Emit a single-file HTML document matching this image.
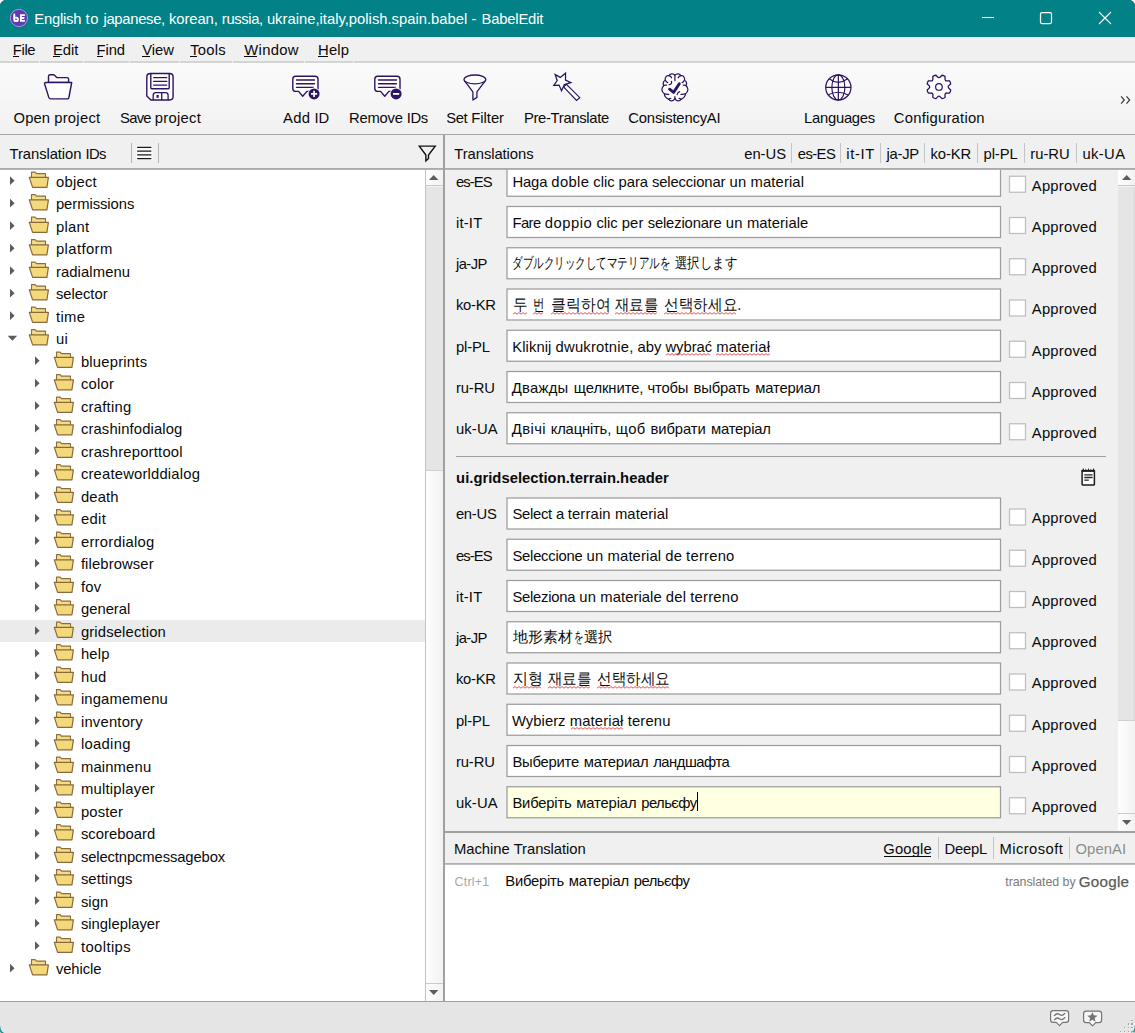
<!DOCTYPE html>
<html><head><meta charset="utf-8"><title>BabelEdit</title>
<style>
html,body{margin:0;padding:0}
body{width:1135px;height:1033px;overflow:hidden;background:#fff;font-family:"Liberation Sans",sans-serif;color:#0a0a0a;position:relative}
#win{position:absolute;left:0;top:0;width:1135px;height:1033px;background:#f0f0f0;overflow:hidden}
.t{position:absolute;white-space:pre;font-size:14.8px;line-height:20px}
.r{position:absolute}
svg{position:absolute;overflow:visible}
u{text-decoration:underline;text-underline-offset:2px;text-decoration-thickness:1px}
</style></head><body><div id="win">

<div class="r" style="left:0px;top:0px;width:1135px;height:37px;background:#028286;"></div>
<svg style="left:0;top:0" width="40" height="37" viewBox="0 0 40 37" fill="none"><circle cx="18.95" cy="17.95" r="8.6" fill="#5f3bb6" stroke="#b28fdd" stroke-width="1"/>
<path d="M14.3 14.4V19.4Q14.3 21.1 16.1 21.1Q17.9 21.1 17.9 19.4Q17.9 17.7 16.3 17.8" stroke="#fff" stroke-width="2" stroke-linecap="round"/>
<path d="M24.9 15.1H20.9V20.9H24.9M20.9 18H24.4" stroke="#fff" stroke-width="1.8" stroke-linejoin="miter"/></svg>
<span class="t" style="left:34.30px;top:8.87px;letter-spacing:-0.219px;color:#fff;">English</span>
<span class="t" style="left:85.42px;top:8.87px;letter-spacing:0.766px;color:#fff;">to</span>
<span class="t" style="left:103.41px;top:8.87px;letter-spacing:-0.297px;color:#fff;">japanese,</span>
<span class="t" style="left:169.03px;top:8.87px;letter-spacing:-0.096px;color:#fff;">korean,</span>
<span class="t" style="left:221.83px;top:8.87px;letter-spacing:-0.377px;color:#fff;">russia,</span>
<span class="t" style="left:266.89px;top:8.87px;color:#fff;">ukraine,italy,polish.spain.babel</span>
<span class="t" style="left:471.42px;top:8.87px;letter-spacing:1.071px;color:#fff;">-</span>
<span class="t" style="left:481.53px;top:8.87px;letter-spacing:-0.190px;color:#fff;">BabelEdit</span>
<svg style="left:0;top:0" width="1135" height="37" viewBox="0 0 1135 37" fill="none" stroke="#fff" stroke-width="1.1">
<path d="M982 17.5H994"/>
<rect x="1040.5" y="12.5" width="11" height="11" rx="1.5" stroke-width="1.25"/>
<path d="M1099 12L1111 24M1111 12L1099 24"/>
</svg>
<span class="t" style="left:12.80px;top:39.87px;letter-spacing:-0.356px;">File</span>
<div class="r" style="left:13px;top:56px;width:6px;height:1px;background:#0a0a0a;"></div>
<span class="t" style="left:53.10px;top:39.87px;letter-spacing:-0.094px;">Edit</span>
<div class="r" style="left:53px;top:56px;width:7px;height:1px;background:#0a0a0a;"></div>
<span class="t" style="left:96.60px;top:39.87px;letter-spacing:-0.133px;">Find</span>
<div class="r" style="left:97px;top:56px;width:6px;height:1px;background:#0a0a0a;"></div>
<span class="t" style="left:142.30px;top:39.87px;letter-spacing:-0.044px;">View</span>
<div class="r" style="left:142px;top:56px;width:8px;height:1px;background:#0a0a0a;"></div>
<span class="t" style="left:190.30px;top:39.87px;letter-spacing:0.176px;">Tools</span>
<div class="r" style="left:190px;top:56px;width:7px;height:1px;background:#0a0a0a;"></div>
<span class="t" style="left:244.30px;top:39.87px;letter-spacing:0.324px;">Window</span>
<div class="r" style="left:244px;top:56px;width:13px;height:1px;background:#0a0a0a;"></div>
<span class="t" style="left:318.10px;top:39.87px;letter-spacing:0.127px;">Help</span>
<div class="r" style="left:318px;top:56px;width:10px;height:1px;background:#0a0a0a;"></div>
<div class="r" style="left:0px;top:61px;width:1135px;height:2px;background:#d4d4d4;"></div>
<div class="r" style="left:39px;top:61px;width:1px;height:2px;background:#f0f0f0;"></div>
<div class="r" style="left:83px;top:61px;width:1px;height:2px;background:#f0f0f0;"></div>
<div class="r" style="left:129px;top:61px;width:1px;height:2px;background:#f0f0f0;"></div>
<div class="r" style="left:179px;top:61px;width:1px;height:2px;background:#f0f0f0;"></div>
<div class="r" style="left:232px;top:61px;width:1px;height:2px;background:#f0f0f0;"></div>
<div class="r" style="left:304px;top:61px;width:1px;height:2px;background:#f0f0f0;"></div>
<div class="r" style="left:353px;top:61px;width:1px;height:2px;background:#f0f0f0;"></div>
<div class="r" style="left:0px;top:63px;width:1135px;height:71px;background:linear-gradient(#fbfbfb,#f1f1f1);"></div>
<div class="r" style="left:0px;top:134px;width:1135px;height:1px;background:#a6a6a6;"></div>
<span class="t" style="left:13.60px;top:107.87px;letter-spacing:0.065px;">Open</span>
<span class="t" style="left:54.18px;top:107.87px;letter-spacing:0.271px;">project</span>
<span class="t" style="left:120.10px;top:107.87px;letter-spacing:-0.776px;">Save</span>
<span class="t" style="left:154.84px;top:107.87px;letter-spacing:0.271px;">project</span>
<span class="t" style="left:283.10px;top:107.87px;letter-spacing:0.327px;">Add</span>
<span class="t" style="left:314.53px;top:107.87px;letter-spacing:-0.148px;">ID</span>
<span class="t" style="left:349.10px;top:107.87px;letter-spacing:-0.260px;">Remove</span>
<span class="t" style="left:406.76px;top:107.87px;letter-spacing:-0.445px;">IDs</span>
<span class="t" style="left:446.30px;top:107.87px;letter-spacing:-0.440px;">Set</span>
<span class="t" style="left:471.31px;top:107.87px;letter-spacing:-0.026px;">Filter</span>
<span class="t" style="left:523.90px;top:107.87px;letter-spacing:-0.312px;">Pre-Translate</span>
<span class="t" style="left:628.30px;top:107.87px;letter-spacing:-0.186px;">ConsistencyAI</span>
<span class="t" style="left:803.90px;top:107.87px;letter-spacing:-0.232px;">Languages</span>
<span class="t" style="left:893.80px;top:107.87px;letter-spacing:0.232px;">Configuration</span>
<svg style="left:0;top:0" width="1135" height="135" viewBox="0 0 1135 135" fill="none" stroke="#2d1364" stroke-width="1.4" stroke-linejoin="round"><path d="M48.5 82.5V76.4Q48.5 74.8 50.1 74.8H53.3Q54 74.8 54.5 75.3L56.7 77.6H66.9Q68.6 77.6 68.6 79.3V82.5Z" fill="#fff"/><path d="M45.9 82.5H71.7L68.9 97.5Q68.6 98.9 67.2 98.9H50.7Q49.3 98.9 48.9 97.6L44.7 84.2Q44.2 82.5 45.9 82.5Z" fill="#fff"/><path d="M150.3 73.5H169.7Q173.1 73.5 173.1 76.9V96.6Q173.1 100 169.7 100H150.9L146.8 96V76.9Q146.8 73.5 150.3 73.5Z" fill="#fff"/><path d="M150.8 73.5V87.8Q150.8 88.8 151.8 88.8H168.2Q169.2 88.8 169.2 87.8V73.5"/><path d="M153.6 77.6H166.8M153.6 81.4H166.8M153.6 85.1H166.8" stroke-linecap="round" stroke-width="1.2"/><path d="M153.2 100V95.2Q153.2 92.6 155.8 92.6H165.5Q168.1 92.6 168.1 95.2V100M161.7 92.6V100" stroke-width="1.3"/><rect x="156.5" y="95" width="2.2" height="2.8" fill="#2d1364" stroke="none"/><path d="M295.8 76.3H315Q318 76.3 318 79.3V88.4Q318 91.4 315 91.4H306.9L302.7 96.3L298.6 91.4H295.8Q292.8 91.4 292.8 88.4V79.3Q292.8 76.3 295.8 76.3Z" fill="#fff"/><path d="M296.5 80H314.5M296.5 83.8H314.5M296.5 87.4H313.5" stroke-linecap="round"/><circle cx="314.1" cy="93.9" r="6.3" fill="#fbfbfb" stroke="none"/><circle cx="314.1" cy="93.9" r="5.5" fill="#2d1364" stroke="none"/><path d="M311 93.9H317.2M314.1 90.8V97" stroke="#fff" stroke-width="1.7"/><path d="M377.8 76.3H397Q400 76.3 400 79.3V88.4Q400 91.4 397 91.4H388.9L384.7 96.3L380.6 91.4H377.8Q374.8 91.4 374.8 88.4V79.3Q374.8 76.3 377.8 76.3Z" fill="#fff"/><path d="M378.5 80H396.5M378.5 83.8H396.5M378.5 87.4H395.5" stroke-linecap="round"/><circle cx="396.1" cy="93.9" r="6.3" fill="#fbfbfb" stroke="none"/><circle cx="396.1" cy="93.9" r="5.5" fill="#2d1364" stroke="none"/><path d="M393 93.9H399.2" stroke="#fff" stroke-width="1.8"/><path d="M464.4 80.6L472.9 91.8V100L476.9 97.4V91.8L485.4 80.6" fill="#fff" stroke-width="1.3"/><ellipse cx="474.9" cy="79.4" rx="10.9" ry="4.4" fill="#fff" stroke-width="1.3"/><path d="M563.6 86.9L576.5 100.5L579.8 97.6L566.4 84.3Z" fill="#fff" stroke-width="1.2" stroke-linejoin="miter"/><path d="M555.2 74.6L560.3 77.4L565.5 73.2L565.5 80.2L570.8 82.6L564.4 84.6L561.5 90.7L559.1 85.1L553.9 85.3L557.2 80.5Z" fill="#fff" stroke-width="1.3" stroke-linejoin="miter"/><path d="M674.9 75.2 Q673.6 73.6 671.5 73.8 Q669.5 74.1 669.1 75.8 Q666.4 75.4 665.6 77.4 Q664.9 78.9 665.3 80.2 Q663.2 81.2 663.2 83.2 Q663.2 84.6 663.9 85.5 Q661.8 87.2 661.9 89.7 Q662.1 92.3 664.4 93.8 Q664.3 96 665.9 97.4 Q667.2 98.6 668.9 99.3 Q669.6 101 671.6 100.9 Q673.9 100.7 674.9 98.5Z" fill="#fff" stroke="none"/><path d="M674.9 75.2 Q673.6 73.6 671.5 73.8 Q669.5 74.1 669.1 75.8 Q666.4 75.4 665.6 77.4 Q664.9 78.9 665.3 80.2 Q663.2 81.2 663.2 83.2 Q663.2 84.6 663.9 85.5 Q661.8 87.2 661.9 89.7 Q662.1 92.3 664.4 93.8 Q664.3 96 665.9 97.4 Q667.2 98.6 668.9 99.3 Q669.6 101 671.6 100.9 Q673.9 100.7 674.9 98.5Z" fill="#fff" stroke="none" transform="translate(1349.8 0) scale(-1 1)"/><g stroke-width="1.25" stroke-linecap="round"><path d="M674.9 75.2 Q673.6 73.6 671.5 73.8 Q669.5 74.1 669.1 75.8 Q666.4 75.4 665.6 77.4 Q664.9 78.9 665.3 80.2 Q663.2 81.2 663.2 83.2 Q663.2 84.6 663.9 85.5 Q661.8 87.2 661.9 89.7 Q662.1 92.3 664.4 93.8 Q664.3 96 665.9 97.4 Q667.2 98.6 668.9 99.3 Q669.6 101 671.6 100.9 Q673.9 100.7 674.9 98.5"/><path d="M674.9 75.5V80.5 M669.2 75.7Q671 76.3 671.6 77.8 M665.4 80.3Q666.2 82.2 667.7 82.6 M663.9 85.5Q665.2 84.9 666.6 85.2 M664.4 93.9Q666.6 94.5 668.8 94.3 M668.9 99.3Q669.6 98.5 670.8 98.4 M674.9 96.5V98.6 M671.5 81.3Q672.2 84.2 669.2 84.6"/><g transform="translate(1349.8 0) scale(-1 1)"><path d="M674.9 75.2 Q673.6 73.6 671.5 73.8 Q669.5 74.1 669.1 75.8 Q666.4 75.4 665.6 77.4 Q664.9 78.9 665.3 80.2 Q663.2 81.2 663.2 83.2 Q663.2 84.6 663.9 85.5 Q661.8 87.2 661.9 89.7 Q662.1 92.3 664.4 93.8 Q664.3 96 665.9 97.4 Q667.2 98.6 668.9 99.3 Q669.6 101 671.6 100.9 Q673.9 100.7 674.9 98.5"/><path d="M669.2 75.7Q671 76.3 671.6 77.8 M665.4 80.3Q666.2 82.2 667.7 82.6 M663.9 85.5Q665.2 84.9 666.6 85.2 M664.4 93.9Q666.6 94.5 668.8 94.3 M668.9 99.3Q669.6 98.5 670.8 98.4 M672.6 94.5Q672.2 92.2 670.2 91.6"/></g></g><path d="M669.6 89.2L673.6 92.4L679.3 83.8" stroke-width="2.9" stroke-linecap="round"/><circle cx="838.35" cy="87.4" r="12.6" fill="#fff" stroke-width="1.25"/><ellipse cx="838.35" cy="87.4" rx="6.5" ry="12.6" stroke-width="1.2"/><path d="M838.35 74.80000000000001V100.0M825.75 87.4H850.95" stroke-width="1.2"/><path d="M829.15 78.7Q838.35 85.9 847.5500000000001 78.7M828.35 94.80000000000001Q838.35 89.60000000000001 848.35 95.0" stroke-width="1.2"/><path d="M940.56 76.78L941.98 75.24Q943.77 75.31 945.09 76.52L945.00 78.62Q944.82 81.08 947.28 80.90L949.38 80.81Q950.59 82.13 950.66 83.92L949.12 85.34Q947.25 86.95 949.12 88.56L950.66 89.98Q950.59 91.77 949.38 93.09L947.28 93.00Q944.82 92.82 945.00 95.28L945.09 97.38Q943.77 98.59 941.98 98.66L940.56 97.12Q938.95 95.25 937.34 97.12L935.92 98.66Q934.13 98.59 932.81 97.38L932.90 95.28Q933.08 92.82 930.62 93.00L928.52 93.09Q927.31 91.77 927.24 89.98L928.78 88.56Q930.65 86.95 928.78 85.34L927.24 83.92Q927.31 82.13 928.52 80.81L930.62 80.90Q933.08 81.08 932.90 78.62L932.81 76.52Q934.13 75.31 935.92 75.24L937.34 76.78Q938.95 78.65 940.56 76.78Z" fill="#fff" stroke-width="1.3"/><circle cx="938.95" cy="86.95" r="3.3" stroke-width="1.2"/><path d="M1121.1 96.4L1124.3 100L1121.1 103.6M1126.5 96.4L1129.7 100L1126.5 103.6" stroke="#3a3a3a" stroke-width="1.2" stroke-linejoin="miter"/></svg>
<span class="t" style="left:9.60px;top:143.87px;letter-spacing:-0.085px;">Translation</span>
<span class="t" style="left:85.38px;top:143.87px;letter-spacing:-0.549px;">IDs</span>
<div class="r" style="left:131px;top:143px;width:1px;height:20px;background:#b4b4b4;"></div>
<div class="r" style="left:158px;top:143px;width:1px;height:20px;background:#b4b4b4;"></div>
<svg style="left:0;top:135px" width="445" height="33" viewBox="0 135 445 33" fill="none"><rect x="136" y="146" width="16.5" height="14" fill="#fcfcfc" opacity=".7"/><path d="M137.6 147.4H150.9M137.6 151.1H150.9M137.6 154.8H150.9M137.6 158.5H150.9" stroke="#1a1a1a" stroke-width="1.25" stroke-linecap="round"/><path d="M419.3 146.1H435.2L428.5 155V158.4L425.9 160.9V155Z" stroke="#111" stroke-width="1.4" stroke-linejoin="miter"/></svg>
<div class="r" style="left:0px;top:170px;width:425px;height:831px;background:#fff;"></div>
<svg width="0" height="0" style="left:0;top:0"><defs>
<g id="fo"><path d="M2.8 6V0.6H6.4L7.8 2.1H16.8V6" fill="#f3dc86" stroke="#8d6d3c" stroke-width="1.1" stroke-linejoin="round"/>
<path d="M0.6 5.9H19.7L18.2 15.9H3.9Z" fill="#f3d87c" stroke="#8a6a3a" stroke-width="1.2" stroke-linejoin="round"/></g>
<path id="ar" d="M0 0L4.6 4.4L0 8.8Z" fill="#5c5c5c"/>
<path id="ad" d="M0 0H9.6L4.8 5Z" fill="#5c5c5c"/>
</defs></svg>
<span class="t" style="left:55.90px;top:171.87px;letter-spacing:0.268px;">object</span>
<span class="t" style="left:55.90px;top:193.87px;letter-spacing:-0.049px;">permissions</span>
<span class="t" style="left:55.90px;top:216.87px;letter-spacing:0.313px;">plant</span>
<span class="t" style="left:55.90px;top:238.87px;letter-spacing:0.416px;">platform</span>
<span class="t" style="left:55.90px;top:261.87px;letter-spacing:0.109px;">radialmenu</span>
<span class="t" style="left:55.90px;top:283.87px;letter-spacing:-0.015px;">selector</span>
<span class="t" style="left:55.90px;top:306.87px;letter-spacing:0.379px;">time</span>
<span class="t" style="left:55.90px;top:328.87px;letter-spacing:0.300px;">ui</span>
<span class="t" style="left:80.90px;top:351.87px;letter-spacing:0.222px;">blueprints</span>
<span class="t" style="left:80.90px;top:373.87px;letter-spacing:0.256px;">color</span>
<span class="t" style="left:80.90px;top:396.87px;letter-spacing:0.246px;">crafting</span>
<span class="t" style="left:80.90px;top:418.87px;letter-spacing:0.134px;">crashinfodialog</span>
<span class="t" style="left:80.90px;top:441.87px;letter-spacing:0.213px;">crashreporttool</span>
<span class="t" style="left:80.90px;top:463.87px;letter-spacing:0.188px;">createworlddialog</span>
<span class="t" style="left:80.90px;top:486.87px;letter-spacing:0.168px;">death</span>
<span class="t" style="left:80.90px;top:508.87px;letter-spacing:0.379px;">edit</span>
<span class="t" style="left:80.90px;top:531.87px;letter-spacing:0.261px;">errordialog</span>
<span class="t" style="left:80.90px;top:553.87px;letter-spacing:0.122px;">filebrowser</span>
<span class="t" style="left:80.90px;top:576.87px;letter-spacing:0.309px;">fov</span>
<span class="t" style="left:80.90px;top:598.87px;letter-spacing:0.016px;">general</span>
<div class="r" style="left:0px;top:620px;width:425px;height:22px;background:#ebebeb;"></div>
<span class="t" style="left:80.90px;top:621.87px;letter-spacing:0.154px;">gridselection</span>
<span class="t" style="left:80.90px;top:643.87px;letter-spacing:0.201px;">help</span>
<span class="t" style="left:80.90px;top:666.87px;letter-spacing:0.369px;">hud</span>
<span class="t" style="left:80.90px;top:688.87px;letter-spacing:0.151px;">ingamemenu</span>
<span class="t" style="left:80.90px;top:711.87px;letter-spacing:0.214px;">inventory</span>
<span class="t" style="left:80.90px;top:733.87px;letter-spacing:0.298px;">loading</span>
<span class="t" style="left:80.90px;top:756.87px;letter-spacing:0.164px;">mainmenu</span>
<span class="t" style="left:80.90px;top:778.87px;letter-spacing:0.235px;">multiplayer</span>
<span class="t" style="left:80.90px;top:801.87px;letter-spacing:0.164px;">poster</span>
<span class="t" style="left:80.90px;top:823.87px;letter-spacing:0.039px;">scoreboard</span>
<span class="t" style="left:80.90px;top:846.87px;letter-spacing:-0.117px;">selectnpcmessagebox</span>
<span class="t" style="left:80.90px;top:868.87px;letter-spacing:0.084px;">settings</span>
<span class="t" style="left:80.90px;top:891.87px;letter-spacing:0.037px;">sign</span>
<span class="t" style="left:80.90px;top:913.87px;letter-spacing:0.016px;">singleplayer</span>
<span class="t" style="left:80.90px;top:936.87px;letter-spacing:0.412px;">tooltips</span>
<span class="t" style="left:55.90px;top:958.87px;letter-spacing:-0.074px;">vehicle</span>
<svg style="left:0;top:0" width="445" height="1001" viewBox="0 0 445 1001"><use href="#ar" x="10" y="176.30"/><use href="#fo" x="28.7" y="171.50"/><use href="#ar" x="10" y="198.80"/><use href="#fo" x="28.7" y="194.00"/><use href="#ar" x="10" y="221.30"/><use href="#fo" x="28.7" y="216.50"/><use href="#ar" x="10" y="243.80"/><use href="#fo" x="28.7" y="239.00"/><use href="#ar" x="10" y="266.30"/><use href="#fo" x="28.7" y="261.50"/><use href="#ar" x="10" y="288.80"/><use href="#fo" x="28.7" y="284.00"/><use href="#ar" x="10" y="311.30"/><use href="#fo" x="28.7" y="306.50"/><use href="#ad" x="7.6" y="335.80"/><use href="#fo" x="28.7" y="329.00"/><use href="#ar" x="35" y="356.30"/><use href="#fo" x="53.7" y="351.50"/><use href="#ar" x="35" y="378.80"/><use href="#fo" x="53.7" y="374.00"/><use href="#ar" x="35" y="401.30"/><use href="#fo" x="53.7" y="396.50"/><use href="#ar" x="35" y="423.80"/><use href="#fo" x="53.7" y="419.00"/><use href="#ar" x="35" y="446.30"/><use href="#fo" x="53.7" y="441.50"/><use href="#ar" x="35" y="468.80"/><use href="#fo" x="53.7" y="464.00"/><use href="#ar" x="35" y="491.30"/><use href="#fo" x="53.7" y="486.50"/><use href="#ar" x="35" y="513.80"/><use href="#fo" x="53.7" y="509.00"/><use href="#ar" x="35" y="536.30"/><use href="#fo" x="53.7" y="531.50"/><use href="#ar" x="35" y="558.80"/><use href="#fo" x="53.7" y="554.00"/><use href="#ar" x="35" y="581.30"/><use href="#fo" x="53.7" y="576.50"/><use href="#ar" x="35" y="603.80"/><use href="#fo" x="53.7" y="599.00"/><use href="#ar" x="35" y="626.30"/><use href="#fo" x="53.7" y="621.50"/><use href="#ar" x="35" y="648.80"/><use href="#fo" x="53.7" y="644.00"/><use href="#ar" x="35" y="671.30"/><use href="#fo" x="53.7" y="666.50"/><use href="#ar" x="35" y="693.80"/><use href="#fo" x="53.7" y="689.00"/><use href="#ar" x="35" y="716.30"/><use href="#fo" x="53.7" y="711.50"/><use href="#ar" x="35" y="738.80"/><use href="#fo" x="53.7" y="734.00"/><use href="#ar" x="35" y="761.30"/><use href="#fo" x="53.7" y="756.50"/><use href="#ar" x="35" y="783.80"/><use href="#fo" x="53.7" y="779.00"/><use href="#ar" x="35" y="806.30"/><use href="#fo" x="53.7" y="801.50"/><use href="#ar" x="35" y="828.80"/><use href="#fo" x="53.7" y="824.00"/><use href="#ar" x="35" y="851.30"/><use href="#fo" x="53.7" y="846.50"/><use href="#ar" x="35" y="873.80"/><use href="#fo" x="53.7" y="869.00"/><use href="#ar" x="35" y="896.30"/><use href="#fo" x="53.7" y="891.50"/><use href="#ar" x="35" y="918.80"/><use href="#fo" x="53.7" y="914.00"/><use href="#ar" x="35" y="941.30"/><use href="#fo" x="53.7" y="936.50"/><use href="#ar" x="10" y="963.80"/><use href="#fo" x="28.7" y="959.00"/></svg>
<div class="r" style="left:425px;top:170px;width:1px;height:831px;background:#c2c2c2;"></div>
<div class="r" style="left:426px;top:170px;width:17px;height:831px;background:linear-gradient(90deg,#fefefe,#f2f2f2);"></div>
<div class="r" style="left:426px;top:187px;width:17px;height:283px;background:#e5e5e5;"></div>
<div class="r" style="left:426px;top:185px;width:17px;height:1px;background:#c6c6c6;"></div>
<div class="r" style="left:426px;top:186px;width:17px;height:1px;background:#f4f4f4;"></div>
<div class="r" style="left:426px;top:470px;width:17px;height:1px;background:#d0d0d0;"></div>
<div class="r" style="left:426px;top:983px;width:17px;height:1px;background:#cacaca;"></div>
<svg style="left:428.8px;top:174.6px" width="10" height="6"><path d="M0 5L4.7 0L9.4 5Z" fill="#5c5c5c"/></svg>
<svg style="left:428.8px;top:990px" width="10" height="6"><path d="M0 0L4.7 5L9.4 0Z" fill="#5c5c5c"/></svg>
<svg style="left:0;top:0" width="1135" height="831" viewBox="0 0 1135 831"><rect x="507" y="165.25" width="493.5" height="31" fill="#fff" stroke="#9c9c9c" stroke-width="1.25"/><rect x="1009.5" y="176.25" width="16" height="16" fill="#fff" stroke="#bebebe" stroke-width="1.25"/><rect x="507" y="206.50" width="493.5" height="31" fill="#fff" stroke="#9c9c9c" stroke-width="1.25"/><rect x="1009.5" y="217.50" width="16" height="16" fill="#fff" stroke="#bebebe" stroke-width="1.25"/><rect x="507" y="247.75" width="493.5" height="31" fill="#fff" stroke="#9c9c9c" stroke-width="1.25"/><rect x="1009.5" y="258.75" width="16" height="16" fill="#fff" stroke="#bebebe" stroke-width="1.25"/><rect x="507" y="289.00" width="493.5" height="31" fill="#fff" stroke="#9c9c9c" stroke-width="1.25"/><rect x="1009.5" y="300.00" width="16" height="16" fill="#fff" stroke="#bebebe" stroke-width="1.25"/><rect x="507" y="330.25" width="493.5" height="31" fill="#fff" stroke="#9c9c9c" stroke-width="1.25"/><rect x="1009.5" y="341.25" width="16" height="16" fill="#fff" stroke="#bebebe" stroke-width="1.25"/><rect x="507" y="371.50" width="493.5" height="31" fill="#fff" stroke="#9c9c9c" stroke-width="1.25"/><rect x="1009.5" y="382.50" width="16" height="16" fill="#fff" stroke="#bebebe" stroke-width="1.25"/><rect x="507" y="412.75" width="493.5" height="31" fill="#fff" stroke="#9c9c9c" stroke-width="1.25"/><rect x="1009.5" y="423.75" width="16" height="16" fill="#fff" stroke="#bebebe" stroke-width="1.25"/><rect x="507" y="498.00" width="493.5" height="31" fill="#fff" stroke="#9c9c9c" stroke-width="1.25"/><rect x="1009.5" y="509.00" width="16" height="16" fill="#fff" stroke="#bebebe" stroke-width="1.25"/><rect x="507" y="539.25" width="493.5" height="31" fill="#fff" stroke="#9c9c9c" stroke-width="1.25"/><rect x="1009.5" y="550.25" width="16" height="16" fill="#fff" stroke="#bebebe" stroke-width="1.25"/><rect x="507" y="580.50" width="493.5" height="31" fill="#fff" stroke="#9c9c9c" stroke-width="1.25"/><rect x="1009.5" y="591.50" width="16" height="16" fill="#fff" stroke="#bebebe" stroke-width="1.25"/><rect x="507" y="621.75" width="493.5" height="31" fill="#fff" stroke="#9c9c9c" stroke-width="1.25"/><rect x="1009.5" y="632.75" width="16" height="16" fill="#fff" stroke="#bebebe" stroke-width="1.25"/><rect x="507" y="663.00" width="493.5" height="31" fill="#fff" stroke="#9c9c9c" stroke-width="1.25"/><rect x="1009.5" y="674.00" width="16" height="16" fill="#fff" stroke="#bebebe" stroke-width="1.25"/><rect x="507" y="704.25" width="493.5" height="31" fill="#fff" stroke="#9c9c9c" stroke-width="1.25"/><rect x="1009.5" y="715.25" width="16" height="16" fill="#fff" stroke="#bebebe" stroke-width="1.25"/><rect x="507" y="745.50" width="493.5" height="31" fill="#fff" stroke="#9c9c9c" stroke-width="1.25"/><rect x="1009.5" y="756.50" width="16" height="16" fill="#fff" stroke="#bebebe" stroke-width="1.25"/><rect x="507" y="786.75" width="493.5" height="31" fill="#ffffe1" stroke="#9c9c9c" stroke-width="1.25"/><rect x="1009.5" y="797.75" width="16" height="16" fill="#fff" stroke="#bebebe" stroke-width="1.25"/></svg>
<span class="t" style="left:455.90px;top:171.87px;letter-spacing:-0.909px;">es-ES</span>
<span class="t" style="left:1031.80px;top:175.87px;letter-spacing:0.227px;">Approved</span>
<span class="t" style="left:512.50px;top:171.87px;letter-spacing:-0.160px;">Haga</span>
<span class="t" style="left:551.35px;top:171.87px;letter-spacing:0.338px;">doble</span>
<span class="t" style="left:593.37px;top:171.87px;letter-spacing:-0.064px;">clic</span>
<span class="t" style="left:618.60px;top:171.87px;letter-spacing:-0.078px;">para</span>
<span class="t" style="left:652.01px;top:171.87px;letter-spacing:-0.141px;">seleccionar</span>
<span class="t" style="left:729.43px;top:171.87px;letter-spacing:0.259px;">un</span>
<span class="t" style="left:750.52px;top:171.87px;letter-spacing:0.120px;">material</span>
<span class="t" style="left:455.90px;top:212.87px;letter-spacing:0.217px;">it-IT</span>
<span class="t" style="left:1031.80px;top:216.87px;letter-spacing:0.227px;">Approved</span>
<span class="t" style="left:512.50px;top:212.87px;letter-spacing:-0.603px;">Fare</span>
<span class="t" style="left:544.63px;top:212.87px;letter-spacing:0.538px;">doppio</span>
<span class="t" style="left:596.41px;top:212.87px;letter-spacing:-0.064px;">clic</span>
<span class="t" style="left:621.64px;top:212.87px;letter-spacing:0.165px;">per</span>
<span class="t" style="left:647.63px;top:212.87px;letter-spacing:-0.147px;">selezionare</span>
<span class="t" style="left:725.81px;top:212.87px;letter-spacing:0.259px;">un</span>
<span class="t" style="left:746.90px;top:212.87px;letter-spacing:0.063px;">materiale</span>
<span class="t" style="left:455.90px;top:253.87px;letter-spacing:-0.540px;">ja-JP</span>
<span class="t" style="left:1031.80px;top:257.87px;letter-spacing:0.227px;">Approved</span>
<span class="t" style="left:511.6px;top:253.4px;font-size:15px;transform-origin:0 0;transform:scaleX(0.703)">ダブルクリックしてマテリアルを</span>
<span class="t" style="left:675.2px;top:253.4px;font-size:15px;transform-origin:0 0;transform:scaleX(0.827)">選択します</span>
<span class="t" style="left:455.90px;top:294.87px;letter-spacing:-0.241px;">ko-KR</span>
<span class="t" style="left:1031.80px;top:298.87px;letter-spacing:0.227px;">Approved</span>
<span class="t" style="left:512.5px;top:295.4px;font-size:16px;transform-origin:0 0;transform:scaleX(0.906)">두</span>
<span class="t" style="left:532.6px;top:295.4px;font-size:16px;transform-origin:0 0;transform:scaleX(0.712)">번</span>
<span class="t" style="left:550.5px;top:295.4px;font-size:16px;transform-origin:0 0;transform:scaleX(0.928)">클릭하여</span>
<span class="t" style="left:615.2px;top:295.4px;font-size:16px;transform-origin:0 0;transform:scaleX(0.900)">재료를</span>
<span class="t" style="left:664.4px;top:295.4px;font-size:16px;transform-origin:0 0;transform:scaleX(0.915)">선택하세요.</span>
<svg style="left:512.5px;top:312.3px" width="14.5" height="3"><path d="M0 2.2L2 0.6L4 2.2L6 0.6L8 2.2L10 0.6L12 2.2L14 0.6" fill="none" stroke="#e8423a" stroke-width="0.9"/></svg>
<svg style="left:532.6px;top:312.3px" width="11.4" height="3"><path d="M0 2.2L2 0.6L4 2.2L6 0.6L8 2.2L10 0.6" fill="none" stroke="#e8423a" stroke-width="0.9"/></svg>
<svg style="left:550.5px;top:312.3px" width="59.4" height="3"><path d="M0 2.2L2 0.6L4 2.2L6 0.6L8 2.2L10 0.6L12 2.2L14 0.6L16 2.2L18 0.6L20 2.2L22 0.6L24 2.2L26 0.6L28 2.2L30 0.6L32 2.2L34 0.6L36 2.2L38 0.6L40 2.2L42 0.6L44 2.2L46 0.6L48 2.2L50 0.6L52 2.2L54 0.6L56 2.2L58 0.6" fill="none" stroke="#e8423a" stroke-width="0.9"/></svg>
<svg style="left:615.2px;top:312.3px" width="43.2" height="3"><path d="M0 2.2L2 0.6L4 2.2L6 0.6L8 2.2L10 0.6L12 2.2L14 0.6L16 2.2L18 0.6L20 2.2L22 0.6L24 2.2L26 0.6L28 2.2L30 0.6L32 2.2L34 0.6L36 2.2L38 0.6L40 2.2L42 0.6" fill="none" stroke="#e8423a" stroke-width="0.9"/></svg>
<svg style="left:664.4px;top:312.3px" width="73.3" height="3"><path d="M0 2.2L2 0.6L4 2.2L6 0.6L8 2.2L10 0.6L12 2.2L14 0.6L16 2.2L18 0.6L20 2.2L22 0.6L24 2.2L26 0.6L28 2.2L30 0.6L32 2.2L34 0.6L36 2.2L38 0.6L40 2.2L42 0.6L44 2.2L46 0.6L48 2.2L50 0.6L52 2.2L54 0.6L56 2.2L58 0.6L60 2.2L62 0.6L64 2.2L66 0.6L68 2.2L70 0.6L72 2.2" fill="none" stroke="#e8423a" stroke-width="0.9"/></svg>
<span class="t" style="left:455.90px;top:336.87px;letter-spacing:-0.127px;">pl-PL</span>
<span class="t" style="left:1031.80px;top:340.87px;letter-spacing:0.227px;">Approved</span>
<span class="t" style="left:512.30px;top:336.87px;letter-spacing:0.073px;">Kliknij</span>
<span class="t" style="left:555.57px;top:336.87px;letter-spacing:0.204px;">dwukrotnie,</span>
<span class="t" style="left:637.61px;top:336.87px;letter-spacing:-0.054px;">aby</span>
<span class="t" style="left:665.42px;top:336.87px;letter-spacing:-0.031px;">wybrać</span>
<span class="t" style="left:716.23px;top:336.87px;letter-spacing:0.153px;">materiał</span>
<svg style="left:666.2px;top:353.3px" width="45.5" height="3"><path d="M0 2.2L2 0.6L4 2.2L6 0.6L8 2.2L10 0.6L12 2.2L14 0.6L16 2.2L18 0.6L20 2.2L22 0.6L24 2.2L26 0.6L28 2.2L30 0.6L32 2.2L34 0.6L36 2.2L38 0.6L40 2.2L42 0.6L44 2.2" fill="none" stroke="#e8423a" stroke-width="0.9"/></svg>
<svg style="left:715.6px;top:353.3px" width="54.5" height="3"><path d="M0 2.2L2 0.6L4 2.2L6 0.6L8 2.2L10 0.6L12 2.2L14 0.6L16 2.2L18 0.6L20 2.2L22 0.6L24 2.2L26 0.6L28 2.2L30 0.6L32 2.2L34 0.6L36 2.2L38 0.6L40 2.2L42 0.6L44 2.2L46 0.6L48 2.2L50 0.6L52 2.2L54 0.6" fill="none" stroke="#e8423a" stroke-width="0.9"/></svg>
<span class="t" style="left:455.90px;top:377.87px;letter-spacing:-0.096px;">ru-RU</span>
<span class="t" style="left:1031.80px;top:381.87px;letter-spacing:0.227px;">Approved</span>
<span class="t" style="left:511.80px;top:377.87px;letter-spacing:0.263px;">Дважды</span>
<span class="t" style="left:573.80px;top:377.87px;letter-spacing:-0.073px;">щелкните,</span>
<span class="t" style="left:647.50px;top:377.87px;letter-spacing:-0.174px;">чтобы</span>
<span class="t" style="left:693.60px;top:377.87px;letter-spacing:-0.200px;">выбрать</span>
<span class="t" style="left:755.30px;top:377.87px;letter-spacing:-0.174px;">материал</span>
<span class="t" style="left:455.90px;top:418.87px;letter-spacing:0.161px;">uk-UA</span>
<span class="t" style="left:1031.80px;top:422.87px;letter-spacing:0.227px;">Approved</span>
<span class="t" style="left:511.80px;top:418.87px;letter-spacing:0.405px;">Двічі</span>
<span class="t" style="left:550.70px;top:418.87px;letter-spacing:-0.183px;">клацніть,</span>
<span class="t" style="left:615.70px;top:418.87px;letter-spacing:0.461px;">щоб</span>
<span class="t" style="left:650.50px;top:418.87px;letter-spacing:-0.084px;">вибрати</span>
<span class="t" style="left:711.00px;top:418.87px;letter-spacing:-0.201px;">матеріал</span>
<div class="r" style="left:456px;top:456px;width:650px;height:1px;background:#a0a0a0;"></div>
<span class="t" style="left:456.10px;top:467.87px;letter-spacing:0.016px;font-weight:bold;">ui.gridselection.terrain.header</span>
<span class="t" style="left:455.90px;top:503.87px;letter-spacing:-0.269px;">en-US</span>
<span class="t" style="left:1031.80px;top:507.87px;letter-spacing:0.227px;">Approved</span>
<span class="t" style="left:512.50px;top:503.87px;letter-spacing:-0.306px;">Select</span>
<span class="t" style="left:555.91px;top:503.87px;letter-spacing:-0.596px;">a</span>
<span class="t" style="left:567.65px;top:503.87px;letter-spacing:0.168px;">terrain</span>
<span class="t" style="left:614.89px;top:503.87px;letter-spacing:0.120px;">material</span>
<span class="t" style="left:455.90px;top:545.87px;letter-spacing:-0.909px;">es-ES</span>
<span class="t" style="left:1031.80px;top:549.87px;letter-spacing:0.227px;">Approved</span>
<span class="t" style="left:512.50px;top:545.87px;letter-spacing:-0.250px;">Seleccione</span>
<span class="t" style="left:586.51px;top:545.87px;letter-spacing:0.259px;">un</span>
<span class="t" style="left:607.60px;top:545.87px;letter-spacing:0.120px;">material</span>
<span class="t" style="left:665.31px;top:545.87px;letter-spacing:0.101px;">de</span>
<span class="t" style="left:686.08px;top:545.87px;letter-spacing:0.229px;">terreno</span>
<span class="t" style="left:455.90px;top:586.87px;letter-spacing:0.217px;">it-IT</span>
<span class="t" style="left:1031.80px;top:590.87px;letter-spacing:0.227px;">Approved</span>
<span class="t" style="left:512.50px;top:586.87px;letter-spacing:-0.266px;">Seleziona</span>
<span class="t" style="left:579.22px;top:586.87px;letter-spacing:0.259px;">un</span>
<span class="t" style="left:600.31px;top:586.87px;letter-spacing:0.063px;">materiale</span>
<span class="t" style="left:665.86px;top:586.87px;letter-spacing:0.182px;">del</span>
<span class="t" style="left:690.26px;top:586.87px;letter-spacing:0.229px;">terreno</span>
<span class="t" style="left:455.90px;top:627.87px;letter-spacing:-0.540px;">ja-JP</span>
<span class="t" style="left:1031.80px;top:631.87px;letter-spacing:0.227px;">Approved</span>
<span class="t" style="left:513.1px;top:627.4px;font-size:15px;transform-origin:0 0;transform:scaleX(0.998)">地形素材</span>
<span class="t" style="left:573.5px;top:627.4px;font-size:15px;transform-origin:0 0;transform:scaleX(0.633)">を</span>
<span class="t" style="left:583.5px;top:627.4px;font-size:15px;transform-origin:0 0;transform:scaleX(0.957)">選択</span>
<span class="t" style="left:455.90px;top:668.87px;letter-spacing:-0.241px;">ko-KR</span>
<span class="t" style="left:1031.80px;top:672.87px;letter-spacing:0.227px;">Approved</span>
<span class="t" style="left:512.5px;top:669.4px;font-size:16px;transform-origin:0 0;transform:scaleX(0.934)">지형</span>
<svg style="left:512.5px;top:686.3px" width="29.9" height="3"><path d="M0 2.2L2 0.6L4 2.2L6 0.6L8 2.2L10 0.6L12 2.2L14 0.6L16 2.2L18 0.6L20 2.2L22 0.6L24 2.2L26 0.6L28 2.2" fill="none" stroke="#e8423a" stroke-width="0.9"/></svg>
<span class="t" style="left:547.8px;top:669.4px;font-size:16px;transform-origin:0 0;transform:scaleX(0.906)">재료를</span>
<svg style="left:547.8px;top:686.3px" width="43.5" height="3"><path d="M0 2.2L2 0.6L4 2.2L6 0.6L8 2.2L10 0.6L12 2.2L14 0.6L16 2.2L18 0.6L20 2.2L22 0.6L24 2.2L26 0.6L28 2.2L30 0.6L32 2.2L34 0.6L36 2.2L38 0.6L40 2.2L42 0.6" fill="none" stroke="#e8423a" stroke-width="0.9"/></svg>
<span class="t" style="left:597.0px;top:669.4px;font-size:16px;transform-origin:0 0;transform:scaleX(0.910)">선택하세요</span>
<svg style="left:597.0px;top:686.3px" width="72.8" height="3"><path d="M0 2.2L2 0.6L4 2.2L6 0.6L8 2.2L10 0.6L12 2.2L14 0.6L16 2.2L18 0.6L20 2.2L22 0.6L24 2.2L26 0.6L28 2.2L30 0.6L32 2.2L34 0.6L36 2.2L38 0.6L40 2.2L42 0.6L44 2.2L46 0.6L48 2.2L50 0.6L52 2.2L54 0.6L56 2.2L58 0.6L60 2.2L62 0.6L64 2.2L66 0.6L68 2.2L70 0.6L72 2.2" fill="none" stroke="#e8423a" stroke-width="0.9"/></svg>
<span class="t" style="left:455.90px;top:710.87px;letter-spacing:-0.127px;">pl-PL</span>
<span class="t" style="left:1031.80px;top:714.87px;letter-spacing:0.227px;">Approved</span>
<span class="t" style="left:512.00px;top:710.87px;letter-spacing:0.033px;">Wybierz</span>
<span class="t" style="left:569.66px;top:710.87px;letter-spacing:0.153px;">materiał</span>
<span class="t" style="left:627.63px;top:710.87px;letter-spacing:0.168px;">terenu</span>
<svg style="left:570.9px;top:727.3px" width="53.9" height="3"><path d="M0 2.2L2 0.6L4 2.2L6 0.6L8 2.2L10 0.6L12 2.2L14 0.6L16 2.2L18 0.6L20 2.2L22 0.6L24 2.2L26 0.6L28 2.2L30 0.6L32 2.2L34 0.6L36 2.2L38 0.6L40 2.2L42 0.6L44 2.2L46 0.6L48 2.2L50 0.6L52 2.2" fill="none" stroke="#e8423a" stroke-width="0.9"/></svg>
<span class="t" style="left:455.90px;top:751.87px;letter-spacing:-0.096px;">ru-RU</span>
<span class="t" style="left:1031.80px;top:755.87px;letter-spacing:0.227px;">Approved</span>
<span class="t" style="left:512.40px;top:751.87px;letter-spacing:-0.224px;">Выберите</span>
<span class="t" style="left:583.70px;top:751.87px;letter-spacing:-0.186px;">материал</span>
<span class="t" style="left:653.20px;top:751.87px;letter-spacing:-0.475px;">ландшафта</span>
<span class="t" style="left:455.90px;top:792.87px;letter-spacing:0.161px;">uk-UA</span>
<span class="t" style="left:1031.80px;top:796.87px;letter-spacing:0.227px;">Approved</span>
<span class="t" style="left:512.40px;top:792.87px;letter-spacing:-0.199px;">Виберіть</span>
<span class="t" style="left:576.20px;top:792.87px;letter-spacing:-0.126px;">матеріал</span>
<span class="t" style="left:641.20px;top:792.87px;letter-spacing:-0.540px;">рельєфу</span>
<div class="r" style="left:697px;top:792px;width:1px;height:19px;background:#000;"></div>
<div class="r" style="left:445px;top:135px;width:690px;height:33px;background:#f0f0f0;"></div>
<span class="t" style="left:454.30px;top:143.87px;letter-spacing:-0.073px;">Translations</span>
<span class="t" style="left:744.20px;top:143.87px;letter-spacing:-0.030px;">en-US</span>
<span class="t" style="left:797.70px;top:143.87px;letter-spacing:-0.541px;">es-ES</span>
<span class="t" style="left:846.30px;top:143.87px;letter-spacing:0.604px;">it-IT</span>
<span class="t" style="left:886.50px;top:143.87px;letter-spacing:-0.264px;">ja-JP</span>
<span class="t" style="left:930.60px;top:143.87px;letter-spacing:-0.144px;">ko-KR</span>
<span class="t" style="left:983.50px;top:143.87px;letter-spacing:-0.090px;">pl-PL</span>
<span class="t" style="left:1030.30px;top:143.87px;letter-spacing:-0.033px;">ru-RU</span>
<span class="t" style="left:1082.50px;top:143.87px;letter-spacing:0.356px;">uk-UA</span>
<div class="r" style="left:791px;top:143px;width:1px;height:20px;background:#c4c4c4;"></div>
<div class="r" style="left:840px;top:143px;width:1px;height:20px;background:#c4c4c4;"></div>
<div class="r" style="left:880px;top:143px;width:1px;height:20px;background:#c4c4c4;"></div>
<div class="r" style="left:924px;top:143px;width:1px;height:20px;background:#c4c4c4;"></div>
<div class="r" style="left:977px;top:143px;width:1px;height:20px;background:#c4c4c4;"></div>
<div class="r" style="left:1024px;top:143px;width:1px;height:20px;background:#c4c4c4;"></div>
<div class="r" style="left:1076px;top:143px;width:1px;height:20px;background:#c4c4c4;"></div>
<div class="r" style="left:0px;top:168px;width:1135px;height:2px;background:linear-gradient(#a6a6a6,#b8b8b8);"></div>
<div class="r" style="left:1118px;top:170px;width:17px;height:661px;background:linear-gradient(90deg,#fefefe,#f2f2f2);"></div>
<div class="r" style="left:1118px;top:187px;width:17px;height:533px;background:#e5e5e5;"></div>
<div class="r" style="left:1118px;top:185px;width:17px;height:1px;background:#c6c6c6;"></div>
<div class="r" style="left:1118px;top:186px;width:17px;height:1px;background:#f4f4f4;"></div>
<div class="r" style="left:1118px;top:720px;width:17px;height:1px;background:#d0d0d0;"></div>
<div class="r" style="left:1118px;top:813px;width:17px;height:1px;background:#cacaca;"></div>
<div class="r" style="left:1133px;top:187px;width:2px;height:533px;background:#dedede;"></div>
<svg style="left:1121.9px;top:174.6px" width="10" height="6"><path d="M0 5L4.7 0L9.4 5Z" fill="#5c5c5c"/></svg>
<svg style="left:1121.9px;top:820px" width="10" height="6"><path d="M0 0L4.7 5L9.4 0Z" fill="#5c5c5c"/></svg>
<svg style="left:1073px;top:462px" width="30" height="30" viewBox="1073 462 30 30" fill="none"><path d="M1082.1 471.2V484.2Q1082.1 485.1 1083 485.1H1093.5Q1094.4 485.1 1094.4 484.2V471.2" fill="#fff" stroke="#1c1c1c" stroke-width="1.5"/><path d="M1081.4 471.6L1083.3 468L1084.6 471.6L1085.8 468.4L1087.1 471.6L1088.4 468L1089.7 471.6L1090.9 468.4L1092.2 471.6L1093.5 468L1095.1 471.6Z" fill="#1c1c1c"/><path d="M1081.4 470.9H1095.1" stroke="#1c1c1c" stroke-width="1.8"/><path d="M1084.3 474.9H1092.6M1084.3 477.5H1092.6M1084.3 480.2H1088.8" stroke="#222" stroke-width="1.3"/></svg>
<div class="r" style="left:443px;top:135px;width:2px;height:867px;background:#a0a0a0;"></div>
<div class="r" style="left:445px;top:831px;width:690px;height:2px;background:#a0a0a0;"></div>
<div class="r" style="left:445px;top:833px;width:690px;height:30px;background:#f0f0f0;"></div>
<span class="t" style="left:453.90px;top:838.87px;letter-spacing:-0.027px;">Machine</span>
<span class="t" style="left:513.71px;top:838.87px;letter-spacing:-0.071px;">Translation</span>
<span class="t" style="left:883.30px;top:838.87px;letter-spacing:0.129px;">Google</span>
<div class="r" style="left:884px;top:856px;width:47px;height:1px;background:#0a0a0a;"></div>
<span class="t" style="left:944.50px;top:838.87px;letter-spacing:-0.243px;">DeepL</span>
<span class="t" style="left:999.60px;top:838.87px;letter-spacing:0.397px;">Microsoft</span>
<span class="t" style="left:1075.50px;top:838.87px;letter-spacing:0.102px;color:#8c8c8c;">OpenAI</span>
<div class="r" style="left:938px;top:837px;width:1px;height:22px;background:#c4c4c4;"></div>
<div class="r" style="left:993px;top:837px;width:1px;height:22px;background:#c4c4c4;"></div>
<div class="r" style="left:1069px;top:837px;width:1px;height:22px;background:#c4c4c4;"></div>
<div class="r" style="left:445px;top:863px;width:690px;height:2px;background:linear-gradient(#a8a8a8,#c8c8c8);"></div>
<div class="r" style="left:445px;top:865px;width:690px;height:136px;background:#fff;"></div>
<span class="t" style="left:454.60px;top:871.70px;font-size:12.4px;letter-spacing:0.213px;color:#a6a6a6;">Ctrl+1</span>
<span class="t" style="left:505.30px;top:870.87px;letter-spacing:-0.236px;">Виберіть</span>
<span class="t" style="left:568.80px;top:870.87px;letter-spacing:-0.126px;">матеріал</span>
<span class="t" style="left:633.80px;top:870.87px;letter-spacing:-0.540px;">рельєфу</span>
<span class="t" style="left:1005.30px;top:871.70px;font-size:12.4px;letter-spacing:-0.054px;color:#7a7a7a;">translated by</span>
<span class="t" style="left:1078.70px;top:871.73px;font-size:15.2px;letter-spacing:0.264px;color:#5a5a5a;-webkit-text-stroke:0.25px #5a5a5a;">Google</span>
<div class="r" style="left:0px;top:1001px;width:1135px;height:1px;background:#a0a0a0;"></div>
<div class="r" style="left:0px;top:1002px;width:1135px;height:31px;background:#e5e5e5;"></div>
<svg style="left:1040px;top:1002px" width="70" height="31" viewBox="1040 1002 70 31" fill="#f6f6f6" stroke="#747474" stroke-width="1.2" stroke-linejoin="round"><path d="M1053.1999999999998 1010.7H1066.0Q1068.6 1010.7 1068.6 1013.3000000000001V1019.6999999999999Q1068.6 1022.3 1066.0 1022.3H1062.7L1059.5 1025.6L1056.3 1022.3H1053.1999999999998Q1050.6 1022.3 1050.6 1019.6999999999999V1013.3000000000001Q1050.6 1010.7 1053.1999999999998 1010.7Z"/><path d="M1054.4 1015.6Q1056.8 1012.6 1059.5 1014.6T1064.8 1013.4M1054.4 1019.8Q1056.8 1016.8 1059.5 1018.8T1064.8 1017.6" fill="none" stroke-width="1.3" stroke-linecap="round"/><path d="M1086.1999999999998 1011.2H1099.0Q1101.6 1011.2 1101.6 1013.8000000000001V1020.0Q1101.6 1022.6 1099.0 1022.6H1095.7L1092.5 1025.9L1089.3 1022.6H1086.1999999999998Q1083.6 1022.6 1083.6 1020.0V1013.8000000000001Q1083.6 1011.2 1086.1999999999998 1011.2Z"/><path d="M1092.40 1011.90L1093.81 1015.36L1097.54 1015.63L1094.68 1018.04L1095.57 1021.67L1092.40 1019.70L1089.23 1021.67L1090.12 1018.04L1087.26 1015.63L1090.99 1015.36Z" fill="#747474" stroke="none"/></svg>
<svg style="left:0;top:0" width="1135" height="1033" viewBox="0 0 1135 1033"><path d="M0 0H4.1A8 8 0 0 0 0 4.1Z" fill="#fbf8f8"/><path d="M1135 0H1130.9A8 8 0 0 1 1135 4.1Z" fill="#fbf8f8"/><path d="M0 1026.2A8 8 0 0 0 3.2 1033H0Z" fill="#d0d0d0"/><path d="M-0.5 1026A8.5 8.5 0 0 0 3.4 1033.5" fill="none" stroke="#149094" stroke-width="1.6"/><path d="M1135 1026.2A8 8 0 0 1 1131.8 1033H1135Z" fill="#d0d0d0"/><path d="M1135.5 1026A8.5 8.5 0 0 1 1131.6 1033.5" fill="none" stroke="#149094" stroke-width="1.6"/></svg>
<div class="r" style="left:1131.0px;top:1019.6px;width:1.8px;height:1.8px;background:#a4a4a4;box-shadow:0.8px 0.8px 0.5px #f6f6f6;"></div>
<div class="r" style="left:1127.5px;top:1023.1px;width:1.8px;height:1.8px;background:#a4a4a4;box-shadow:0.8px 0.8px 0.5px #f6f6f6;"></div>
<div class="r" style="left:1131.0px;top:1023.1px;width:1.8px;height:1.8px;background:#a4a4a4;box-shadow:0.8px 0.8px 0.5px #f6f6f6;"></div>
<div class="r" style="left:1123.6px;top:1026.6px;width:1.8px;height:1.8px;background:#a4a4a4;box-shadow:0.8px 0.8px 0.5px #f6f6f6;"></div>
<div class="r" style="left:1127.5px;top:1026.6px;width:1.8px;height:1.8px;background:#a4a4a4;box-shadow:0.8px 0.8px 0.5px #f6f6f6;"></div>
<div class="r" style="left:1131.0px;top:1026.6px;width:1.8px;height:1.8px;background:#a4a4a4;box-shadow:0.8px 0.8px 0.5px #f6f6f6;"></div>
<div class="r" style="left:1119.5px;top:1030.5px;width:1.8px;height:1.8px;background:#a4a4a4;box-shadow:0.8px 0.8px 0.5px #f6f6f6;"></div>
<div class="r" style="left:1123.6px;top:1030.5px;width:1.8px;height:1.8px;background:#a4a4a4;box-shadow:0.8px 0.8px 0.5px #f6f6f6;"></div>
<div class="r" style="left:1127.5px;top:1030.5px;width:1.8px;height:1.8px;background:#a4a4a4;box-shadow:0.8px 0.8px 0.5px #f6f6f6;"></div>
<div class="r" style="left:1131.0px;top:1030.5px;width:1.8px;height:1.8px;background:#a4a4a4;box-shadow:0.8px 0.8px 0.5px #f6f6f6;"></div>
</div></body></html>
